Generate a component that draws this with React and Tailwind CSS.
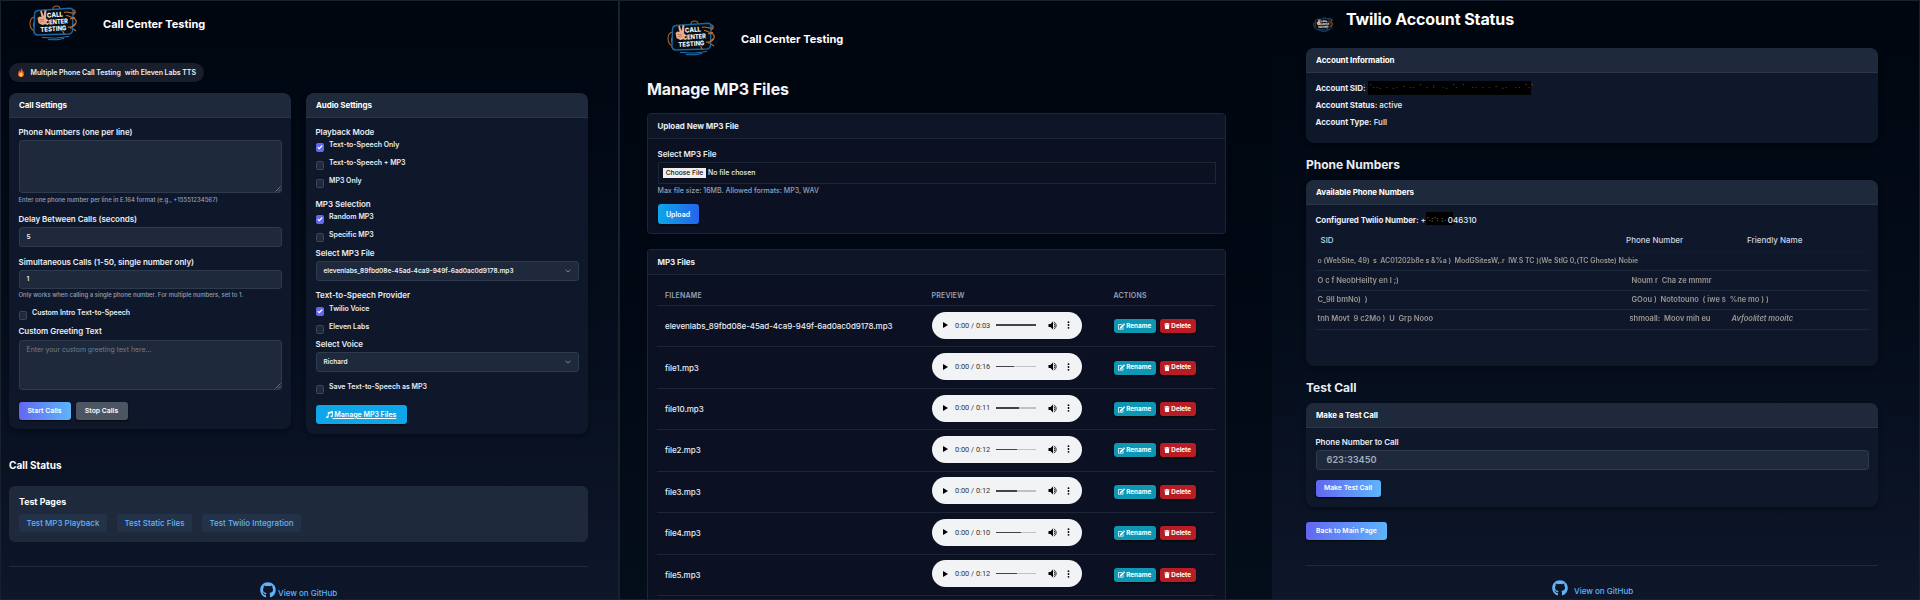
import React from "react";
import { FaMusic, FaGithub, FaTrash, FaEdit } from "react-icons/fa";

function Logo({ className }) {
  return (
    <svg viewBox="0 0 50 36" className={className}>
      <g fill="none" stroke="#a8642a" strokeWidth="1.1">
        <path d="M5 12C-.5 14-.5 24 6 26M24 4c0-4 7-4 7 0M7 16c-4 2-3 7 0 7M4 27l4-2" />
      </g>
      <path d="M9 5.500 41 3.200a3 3 0 0 1 3 2.800L43.500 25a4 4 0 0 1-3.500 4L9 30a4 4 0 0 1-4-3L5.500 9A4 4 0 0 1 9 5.500Z" fill="#070d14" stroke="#1d639c" strokeWidth="1.400" />
      <path d="M13 32.400q14 2 27-1M19 34.600q10 1 16-1.200" fill="none" stroke="#1b78b8" strokeWidth="1" />
      <g fill="none" stroke="#b56d2c" strokeWidth="1.100">
        <path d="M35 7.500c4-2 7 2 11 0M37 10.500c4 0 5 3 9 2M41 14c5-2 8 2 5 5s-5 2-4 5M39 22c6 1 9-3 8-7M44 5c3 0 3 4 0 5M33 25l2.500 4.500M44 24l3 2" />
      </g>
      <g transform="rotate(-4 25 18)" fill="#f5f5f5" stroke="#070d14" strokeWidth="1.2" paintOrder="stroke" fontFamily="Inter, sans-serif" fontWeight="800">
        <text x="18.5" y="12.2" fontSize="6.6" textLength="16" lengthAdjust="spacingAndGlyphs">CALL</text>
        <text x="16" y="19.2" fontSize="6.6" textLength="23" lengthAdjust="spacingAndGlyphs">CENTER</text>
        <text x="11" y="26" fontSize="6.6" textLength="26" lengthAdjust="spacingAndGlyphs">TESTING</text>
      </g>
      <path d="M8.500 13 10.500 11.500 12.500 12 11.200 6.400 12.800 5.600 14.500 11 15.600 5 17.400 5.400 17 13 18.500 15 17 19 13.400 20 9.600 18.200Z" fill="#e9ab8c" />
      <path d="M10.500 14.500h4M11 16.600l4-.6" stroke="#9c5f48" strokeWidth=".6" />
    </svg>
  );
}

const Label = ({ className = "", children }) => (
  <div className={`flex shrink-0 items-center whitespace-nowrap text-[8px] font-semibold tracking-[-0.04px] text-[#e8edf4] ${className}`}>{children}</div>
);

const Hint = ({ className = "", children }) => (
  <div className={`flex shrink-0 items-center whitespace-nowrap text-[5.97px] font-medium text-[#94a3b8] ${className}`}>{children}</div>
);

const CardHeader = ({ className = "", children }) => (
  <div className={`flex h-[25px] shrink-0 items-center whitespace-nowrap border-b border-[#2a3647] bg-[#1e293b] px-2.5 text-[8px] font-bold tracking-[-0.1px] text-white ${className}`}>{children}</div>
);

const Card = ({ className = "", children }) => (
  <section className={`flex shrink-0 flex-col overflow-hidden rounded-lg bg-[#0f172a] shadow-[0_2px_4px_rgba(0,0,0,0.35)] ${className}`}>{children}</section>
);

function Check({ checked, className = "", children }) {
  return (
    <div className={`flex h-[18px] shrink-0 items-start gap-[5px] ${className}`}>
      <span className={`mt-[5px] flex size-[8.5px] items-center justify-center rounded-[1.5px] border ${checked ? "border-[#6366f1] bg-[#6366f1]" : "border-[#3a4759] bg-[#1e293b]"}`}>
        {checked && (
          <svg viewBox="0 0 8 8" className="size-2 shrink-0">
            <path d="M1.8 4.2 3.3 5.6 6.2 2.5" fill="none" stroke="#fff" strokeWidth="1.2" />
          </svg>
        )}
      </span>
      <span className="mt-[2px] whitespace-nowrap text-[7px] font-semibold leading-[10px] tracking-[-0.02px] text-[#e8edf4]">{children}</span>
    </div>
  );
}

const Grip = () => (
  <svg viewBox="0 0 6 6" className="size-[6px]">
    <path d="M.5 5.5 5.5.5M3.3 5.5 5.5 3.3" stroke="#8590a0" strokeWidth=".7" />
  </svg>
);

const Area = ({ className, children }) => (
  <div className={`flex w-[263px] shrink-0 justify-between rounded-[3px] border border-[#2e3b4e] bg-[#1e293b] pl-[7px] text-[6.9px] text-[#757d89] ${className}`}>
    <span className="mt-[4px] leading-[10px]">{children}</span>
    <span className="flex items-end"><Grip /></span>
  </div>
);

const Field = ({ className, children }) => (
  <div className={`flex shrink-0 items-center justify-between whitespace-nowrap rounded-[3px] border border-[#2e3b4e] bg-[#1e293b] px-[7px] text-[6.5px] font-semibold text-[#e8edf4] ${className}`}>{children}</div>
);

const Chevron = () => (
  <svg viewBox="0 0 6 4" className="h-[4px] w-[6px]">
    <path d="M.6.8 3 3.1 5.4.8" fill="none" stroke="#94a3b8" strokeWidth=".8" />
  </svg>
);

const Btn = ({ className, children }) => (
  <button className={`flex shrink-0 items-center justify-center whitespace-nowrap rounded-[3px] text-[6.85px] font-semibold text-white shadow-[0_1px_2px_rgba(0,0,0,0.7)] ${className}`}>{children}</button>
);

function MainPage() {
  return (
    <main className="flex h-[600px] w-[620px] shrink-0 flex-col border-r-2 border-[#17212f] bg-linear-to-b from-[#00060f] via-[#050d1b] to-[#0e162a] pl-[9px]">
      <header className="flex h-[63px] shrink-0 pl-5">
        <Logo className="mt-[5px] h-[36px] w-[50px]" />
        <h1 className="ml-6 mt-[14px] h-5 whitespace-nowrap text-[11px] font-bold leading-5 text-white">Call Center Testing</h1>
      </header>
      <div className="flex h-[19px] w-[195px] shrink-0 items-center whitespace-nowrap rounded-full bg-[#181f2a] pl-2 text-[7px] font-semibold text-[#e8edf4]">
        <svg viewBox="0 0 10 12" className="mr-[5.5px] h-[9px] w-[8px]">
          <path d="M5 0C6 3 9 4 9 8a4 4 0 0 1-8 0C1 6 2 5 2.4 3 3.300 4 3.500 5 4 5 5 4 4.500 2 5 0Z" fill="#f0542c" />
          <path d="M5 5c1 2 2.300 2 2.300 4a2.300 2.500 0 0 1-4.600 0C2.700 8 3.500 7.500 3.600 6.600 4.500 7 4.700 6 5 5Z" fill="#ffd34a" />
        </svg>
        <span className="mr-[4px] tracking-[-0.06px]">Multiple Phone Call Testing</span>
        <span className="tracking-[-0.06px]">with Eleven Labs TTS</span>
      </div>
      <div className="mt-[11px] flex h-[341px] shrink-0 items-start gap-[15px]">
        <Card className="h-[336px] w-[282px]">
          <CardHeader>Call Settings</CardHeader>
          <div className="flex flex-col pl-[9.5px]">
            <Label className="mt-[7px] h-[14px]">Phone Numbers (one per line)</Label>
            <Area className="mt-px h-[53px]" />
            <Hint className="mt-px h-3">Enter one phone number per line in E.164 format (e.g., +15551234567)</Hint>
            <Label className="mt-[6px] h-[13px]">Delay Between Calls (seconds)</Label>
            <Field className="mt-[2px] h-5 w-[263px]">5</Field>
            <Label className="mt-[8px] h-[13px]">Simultaneous Calls (1-50, single number only)</Label>
            <Field className="mt-[2px] h-[19px] w-[263px]">1</Field>
            <Hint className="h-3">Only works when calling a single phone number. For multiple numbers, set to 1.</Hint>
            <Check className="mt-[5px]">Custom Intro Text-to-Speech</Check>
            <Label className="h-[14px]">Custom Greeting Text</Label>
            <Area className="mt-[2px] h-[50px]">Enter your custom greeting text here...</Area>
            <div className="mt-3 flex gap-[5px]">
              <Btn className="h-[18px] w-[52px] bg-linear-to-r from-[#6366f1] to-[#5db4fa]">Start Calls</Btn>
              <Btn className="h-[18px] w-[52px] bg-[#4b5563]">Stop Calls</Btn>
            </div>
          </div>
        </Card>
        <Card className="h-[341px] w-[282px]">
          <CardHeader>Audio Settings</CardHeader>
          <div className="flex flex-col pl-[9.5px]">
            <Label className="mt-[7px] h-[14px]">Playback Mode</Label>
            <Check checked className="-mt-px">Text-to-Speech Only</Check>
            <Check>Text-to-Speech + MP3</Check>
            <Check>MP3 Only</Check>
            <Label className="mt-[5px] h-[13px]">MP3 Selection</Label>
            <Check checked>Random MP3</Check>
            <Check>Specific MP3</Check>
            <Label className="mt-px h-[12px]">Select MP3 File</Label>
            <Field className="mt-[2px] h-5 w-[263px]">elevenlabs_89fbd08e-45ad-4ca9-949f-6ad0ac0d9178.mp3<Chevron /></Field>
            <Label className="mt-[7px] h-[14px]">Text-to-Speech Provider</Label>
            <Check checked>Twilio Voice</Check>
            <Check>Eleven Labs</Check>
            <Label className="h-[12px]">Select Voice</Label>
            <Field className="mt-[2px] h-5 w-[263px]">Richard<Chevron /></Field>
            <Check className="mt-[8px]">Save Text-to-Speech as MP3</Check>
            <Btn className="mt-[7px] h-[19px] w-[91px] bg-[#0ea5e9] text-[7px]! underline"><FaMusic className="size-[7px] shrink-0" />&nbsp;Manage MP3 Files</Btn>
          </div>
        </Card>
      </div>
      <h2 className="mt-[21px] h-5 shrink-0 text-[10px] font-bold leading-5 text-white">Call Status</h2>
      <section className="mt-[11px] flex h-[56px] w-[579px] shrink-0 flex-col rounded-[6px] bg-[#1e293b] pl-2.5">
        <h3 className="mt-[9px] h-[14px] text-[8.8px] font-bold leading-[14px] text-white">Test Pages</h3>
        <nav className="mt-[5px] flex gap-2.5 whitespace-nowrap text-[8px] font-medium text-[#60b4fa]">
          <a className="flex h-[18px] w-[88px] items-center justify-center rounded-[3px] bg-[#233249]">Test MP3 Playback</a>
          <a className="flex h-[18px] w-[75px] items-center justify-center rounded-[3px] bg-[#233249]">Test Static Files</a>
          <a className="flex h-[18px] w-[99px] items-center justify-center rounded-[3px] bg-[#233249]">Test Twilio Integration</a>
        </nav>
      </section>
      <footer className="mt-6 flex h-[33px] w-[579px] shrink-0 overflow-hidden border-t border-[#1f2a3a] pl-[251px] text-[#60b4fa]">
        <FaGithub className="mt-[15px] size-4 shrink-0" />
        <span className="ml-[2px] mt-[20px] whitespace-nowrap text-[8px] font-medium leading-[13px]">View on GitHub</span>
      </footer>
    </main>
  );
}

const files = [
  ["elevenlabs_89fbd08e-45ad-4ca9-949f-6ad0ac0d9178.mp3", "0:03", 41],
  ["file1.mp3", "0:16", 18],
  ["file10.mp3", "0:11", 23],
  ["file2.mp3", "0:12", 21],
  ["file3.mp3", "0:12", 21],
  ["file4.mp3", "0:10", 25],
  ["file5.mp3", "0:12", 21],
];

function Player({ time, loaded }) {
  return (
    <div className="flex h-[27px] w-[150px] items-center rounded-full bg-[#f1f3f4] pl-[11.5px] text-[#111]">
      <svg viewBox="0 0 5 6" className="h-[6px] w-[5px]"><path d="M0 0 5 3 0 6Z" /></svg>
      <span className="ml-[7px] w-[41px] whitespace-nowrap font-[Roboto] text-[7.4px] text-[#333]">0:00 / {time}</span>
      <span className="flex h-[1.5px] w-[40px] bg-[#bfc1c3]"><span className="bg-[#444]" style={{ width: loaded }} /></span>
      <svg viewBox="0 0 18 18" className="ml-[12px] size-[9px]">
        <path d="M1 6v6h4l5 5V1L5 6Z" /><path d="M12 5q4 4 0 8M12 1.500q9 7.500 0 15" fill="none" stroke="#111" strokeWidth="1.700" />
      </svg>
      <svg viewBox="0 0 3 8" className="ml-[10px] h-[8px] w-[3px]"><circle cx="1.500" cy="1.200" r=".9" /><circle cx="1.500" cy="4" r=".9" /><circle cx="1.500" cy="6.800" r=".9" /></svg>
    </div>
  );
}

function FilesPage() {
  return (
    <main className="flex h-[600px] w-[652px] shrink-0 flex-col overflow-hidden bg-linear-to-b from-[#00060f] via-[#010813] to-[#040e1a] pl-[27px]">
      <header className="flex h-[77px] shrink-0 pl-5">
        <Logo className="mt-[20px] h-[36px] w-[50px]" />
        <h1 className="ml-6 mt-[29px] h-5 whitespace-nowrap text-[11px] font-bold leading-5 text-white">Call Center Testing</h1>
      </header>
      <h2 className="h-6 shrink-0 text-[16px] font-bold leading-[25px] tracking-[-0.05px] text-[#f1f5f9]">Manage MP3 Files</h2>
      <section className="mt-3 flex h-[121px] w-[579px] shrink-0 flex-col rounded-[4px] border border-[#1c2635] bg-[#0b1122]">
        <div className="flex h-[25px] items-center border-b border-[#1c2635] bg-[#0d1527] pl-[9.5px] text-[8px] font-bold tracking-[-0.07px] text-[#e8edf4]">Upload New MP3 File</div>
        <div className="flex flex-col px-[9.5px]">
          <Label className="mt-[8px] h-[13px]">Select MP3 File</Label>
          <div className="mt-[2px] flex h-[22px] items-center gap-[2px] border border-[#1c2635] bg-[#0b1121] pl-[4.5px] text-[6.9px] font-medium text-[#e8edf4]">
            <span className="flex h-[10px] w-[43px] items-center justify-center whitespace-nowrap bg-[#efefef] text-[6.7px] text-[#111]">Choose File</span>
            No file chosen
          </div>
          <Hint className="h-[13px] text-[7px]!">Max file size: 16MB. Allowed formats: MP3, WAV</Hint>
          <Btn className="mt-[7px] h-5 w-[41px] bg-linear-to-r from-[#0ea5e9] to-[#2563eb] text-[7px]!">Upload</Btn>
        </div>
      </section>
      <section className="mt-[15px] flex h-[360px] w-[579px] shrink-0 flex-col rounded-t-[4px] border border-b-0 border-[#1c2635] bg-[#0b1122]">
        <div className="flex h-[25px] shrink-0 items-center border-b border-[#1c2635] bg-[#0d1527] pl-[9.5px] text-[8px] font-bold tracking-[-0.07px] text-[#e8edf4]">MP3 Files</div>
        <div className="ml-[9px] flex h-[31px] w-[558px] shrink-0 items-center border-b border-[#1c2635] pl-2 pt-[10px] text-[7px] font-semibold tracking-[0.2px] text-[#94a3b8]">
          <span className="w-[266.5px]">FILENAME</span><span className="w-[182px]">PREVIEW</span><span>ACTIONS</span>
        </div>
        {files.map(([name, time, loaded]) => (
          <div key={name} className="ml-[9px] flex h-[41.43px] w-[558px] shrink-0 items-center border-b border-[#1c2635] pl-2">
            <span className="w-[266.5px] text-[8px] font-medium tracking-[-0.06px] text-[#e8edf4]">{name}</span>
            <div className="w-[182px] pb-[2px]"><Player time={time} loaded={loaded} /></div>
            <Btn className="h-[14px] w-[42px] gap-[1.5px] bg-[#0e96b3] text-[6.3px]! font-bold!"><FaEdit className="size-[7px]" />Rename</Btn>
            <Btn className="ml-1 h-[14px] w-[36px] gap-[1.5px] bg-[#b91c24] text-[6.3px]! font-bold!"><FaTrash className="size-[6px]" />Delete</Btn>
          </div>
        ))}
      </section>
    </main>
  );
}

const Garble = ({ className = "", children }) => (
  <span className={`whitespace-pre text-[7.5px] font-semibold text-[#9b9691] blur-[0.4px] ${className}`}>{children}</span>
);

function TwilioPage() {
  return (
    <main className="flex h-[600px] min-w-0 flex-1 flex-col bg-linear-to-b from-[#00060f] via-[#040c19] to-[#0e162a] pl-[34px] text-[#e8edf4]">
      <header className="flex h-[48px] shrink-0 pl-[7px]">
        <Logo className="mt-[17px] h-[15px] w-[21px]" />
        <h1 className="ml-3 mt-[7px] h-6 whitespace-nowrap text-[16px] font-bold leading-[25px] tracking-[-0.1px] text-white">Twilio Account Status</h1>
      </header>
      <Card className="h-[95px] w-[572px]">
        <CardHeader>Account Information</CardHeader>
        <div className="flex flex-col pl-[9.5px] pt-[6px] text-[8px] font-medium">
          <div className="flex h-[17px] items-center gap-[2px]"><b className="text-[8px] font-bold tracking-[-0.07px]">Account SID:</b>
            <span className="flex h-[14px] w-[163px] items-center justify-center whitespace-pre bg-black text-[4.5px] tracking-[2px] text-[#999]">' '.., . ,. - .. ' . :  ., '. '  .. . . - ,.  .. '.'</span></div>
          <div className="flex h-[17px] items-center gap-[2px]"><b className="text-[8px] font-bold tracking-[-0.07px]">Account Status:</b>active</div>
          <div className="flex h-[17px] items-center gap-[2px]"><b className="text-[8px] font-bold tracking-[-0.07px]">Account Type:</b>Full</div>
        </div>
      </Card>
      <h2 className="mt-3 h-5 shrink-0 text-[12px] font-bold leading-5">Phone Numbers</h2>
      <Card className="mt-[5px] h-[186px] w-[572px]">
        <CardHeader>Available Phone Numbers</CardHeader>
        <div className="flex flex-col px-[9.5px] text-[8px] font-medium">
          <div className="mt-[6px] flex h-[17px] items-center"><b className="mr-[2px] whitespace-nowrap text-[8px] font-bold tracking-[-0.08px]">Configured Twilio Number:</b>+
            <span className="-mt-[3px] flex h-[13px] w-[27px] items-center justify-between whitespace-pre bg-black pl-[1px] pt-[3px]"><span className="text-[5px] tracking-[1px] text-[#bbb]">'.;': ;.</span>0</span>46310</div>
          <div className="flex h-[23.5px] items-center border-b border-[#17223480] pl-[5px] pt-px text-[8px] text-[#cbd5e1]"><span className="w-[305.5px]">SID</span><span className="w-[121px]">Phone Number</span><span>Friendly Name</span></div>
          <div className="flex h-[19.5px] items-center border-b border-[#1c283a] pl-[2px]"><Garble className="text-[7px]! tracking-[-0.03px]">o (WebSite, 49)  s  AC01202b8e s &%a )  ModGSitesW,.r  IW.S TC )(We StIG 0,(TC Ghoste) Nobie</Garble></div>
          <div className="flex h-[19.5px] items-center border-b border-[#1c283a] pl-[2px]"><Garble className="w-[314px]">O c f NeobHeilty en I ;)</Garble><Garble>Noum r  Cha ze mmmr</Garble></div>
          <div className="flex h-[19.5px] items-center border-b border-[#1c283a] pl-[2px]"><Garble className="w-[314px]">C_9ll bmNo)  )</Garble><Garble>GOou )  Nototouno  ( iwe s  %ne mo ) )</Garble></div>
          <div className="flex h-[19.5px] items-center border-b border-[#1c283a] pb-[2px] pl-[2px]"><Garble className="w-[312px]">tnh Movt  9 c2Mo )  U  Grp Nooo</Garble><Garble className="w-[102px]">shmoall:  Moov mih eu</Garble><Garble className="italic">Avfoolitet mooitc</Garble></div>
        </div>
      </Card>
      <h2 className="mt-3 h-5 shrink-0 text-[12px] font-bold leading-5">Test Call</h2>
      <Card className="mt-[5px] h-[104px] w-[572px]">
        <CardHeader>Make a Test Call</CardHeader>
        <div className="flex flex-col px-[9.5px]">
          <Label className="mt-[7px] h-[14px]">Phone Number to Call</Label>
          <Field className="mt-px h-5 pl-[10px]! text-[9.2px]! text-[#a3adba]!">623:33450</Field>
          <Btn className="mt-[10px] h-[17px] w-[65px] bg-linear-to-r from-[#6366f1] to-[#5db4fa]">Make Test Call</Btn>
        </div>
      </Card>
      <Btn className="mt-[15px] h-[18px] w-[81px] bg-linear-to-r from-[#6366f1] to-[#5db4fa]">Back to Main Page</Btn>
      <footer className="mt-[25px] flex h-[34px] w-[572px] shrink-0 overflow-hidden border-t border-[#1f2a3a] pl-[246px] text-[#60b4fa]">
        <FaGithub className="mt-[14px] size-4 shrink-0" />
        <span className="ml-[6px] mt-[19px] whitespace-nowrap text-[8px] font-medium leading-[13px]">View on GitHub</span>
      </footer>
    </main>
  );
}

export default function App() {
  return (
    <div className="relative flex h-[600px] w-[1920px] overflow-hidden bg-[#00060f] font-[Inter,sans-serif] leading-none">
      <MainPage />
      <FilesPage />
      <TwilioPage />
      <div className="pointer-events-none absolute inset-0 border border-[#17212f]" />
    </div>
  );
}
